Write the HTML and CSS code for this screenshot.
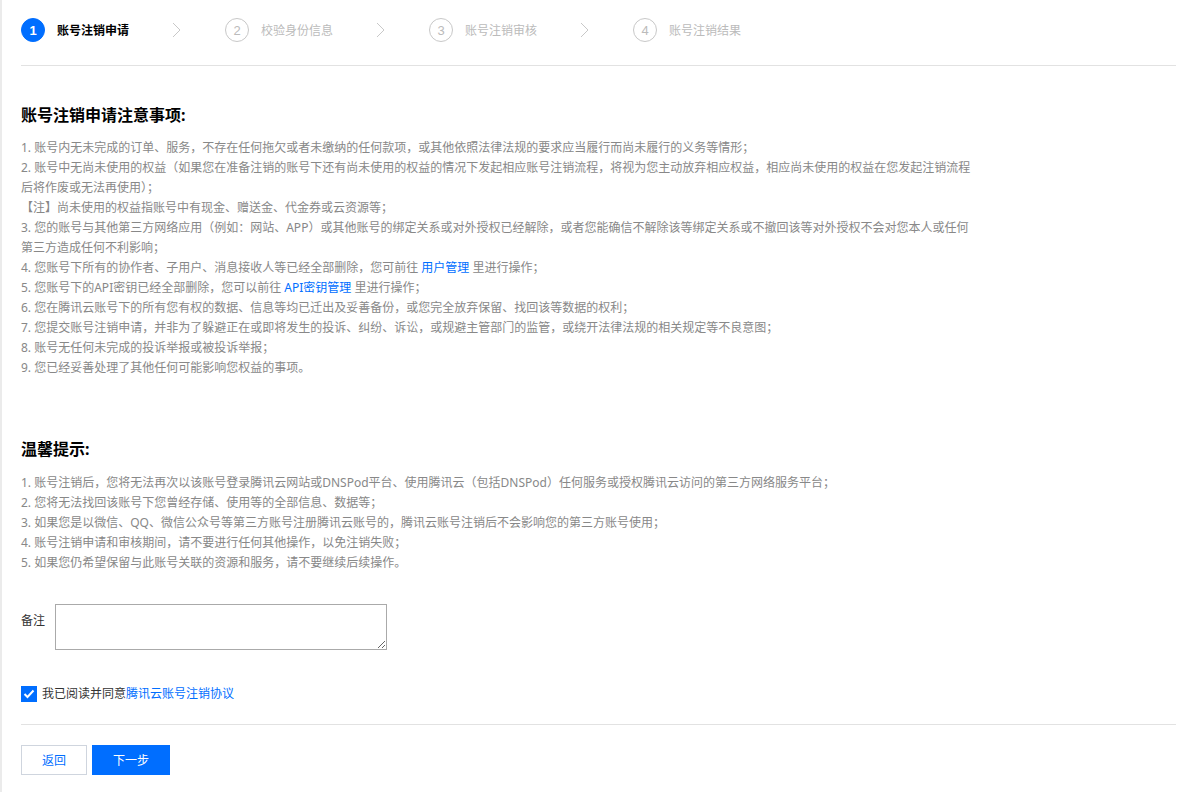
FILE: index.html
```html
<!DOCTYPE html>
<html lang="zh-CN">
<head>
<meta charset="utf-8">
<title>账号注销申请</title>
<link rel="stylesheet" href="styles.css">
</head>
<body>
<div class="page">
  <div class="steps">
    <div class="step active">
      <span class="num">1</span><span class="label">账号注销申请</span>
      <svg class="chev" width="9" height="16" viewBox="0 0 9 16"><path d="M1 1 L8 8 L1 15" fill="none" stroke="#c8c8c8" stroke-width="1"/></svg>
    </div>
    <div class="step">
      <span class="num">2</span><span class="label">校验身份信息</span>
      <svg class="chev" width="9" height="16" viewBox="0 0 9 16"><path d="M1 1 L8 8 L1 15" fill="none" stroke="#c8c8c8" stroke-width="1"/></svg>
    </div>
    <div class="step">
      <span class="num">3</span><span class="label">账号注销审核</span>
      <svg class="chev" width="9" height="16" viewBox="0 0 9 16"><path d="M1 1 L8 8 L1 15" fill="none" stroke="#c8c8c8" stroke-width="1"/></svg>
    </div>
    <div class="step">
      <span class="num">4</span><span class="label">账号注销结果</span>
    </div>
  </div>

  <h2 class="title first">账号注销申请注意事项:</h2>
  <div class="list">
    <p>1. 账号内无未完成的订单、服务，不存在任何拖欠或者未缴纳的任何款项，或其他依照法律法规的要求应当履行而尚未履行的义务等情形；</p>
    <p>2. 账号中无尚未使用的权益（如果您在准备注销的账号下还有尚未使用的权益的情况下发起相应账号注销流程，将视为您主动放弃相应权益，相应尚未使用的权益在您发起注销流程<br>后将作废或无法再使用）；</p>
    <p>【注】尚未使用的权益指账号中有现金、赠送金、代金券或云资源等；</p>
    <p>3. 您的账号与其他第三方网络应用（例如：网站、APP）或其他账号的绑定关系或对外授权已经解除，或者您能确信不解除该等绑定关系或不撤回该等对外授权不会对您本人或任何<br>第三方造成任何不利影响；</p>
    <p>4. 您账号下所有的协作者、子用户、消息接收人等已经全部删除，您可前往 <a href="#">用户管理</a> 里进行操作；</p>
    <p>5. 您账号下的API密钥已经全部删除，您可以前往 <a href="#">API密钥管理</a> 里进行操作；</p>
    <p>6. 您在腾讯云账号下的所有您有权的数据、信息等均已迁出及妥善备份，或您完全放弃保留、找回该等数据的权利；</p>
    <p>7. 您提交账号注销申请，并非为了躲避正在或即将发生的投诉、纠纷、诉讼，或规避主管部门的监管，或绕开法律法规的相关规定等不良意图；</p>
    <p>8. 账号无任何未完成的投诉举报或被投诉举报；</p>
    <p>9. 您已经妥善处理了其他任何可能影响您权益的事项。</p>
  </div>

  <h2 class="title second">温馨提示:</h2>
  <div class="list">
    <p>1. 账号注销后，您将无法再次以该账号登录腾讯云网站或DNSPod平台、使用腾讯云（包括DNSPod）任何服务或授权腾讯云访问的第三方网络服务平台；</p>
    <p>2. 您将无法找回该账号下您曾经存储、使用等的全部信息、数据等；</p>
    <p>3. 如果您是以微信、QQ、微信公众号等第三方账号注册腾讯云账号的，腾讯云账号注销后不会影响您的第三方账号使用；</p>
    <p>4. 账号注销申请和审核期间，请不要进行任何其他操作，以免注销失败；</p>
    <p>5. 如果您仍希望保留与此账号关联的资源和服务，请不要继续后续操作。</p>
  </div>

  <div class="remark">
    <label class="remark-label" for="remark">备注</label>
    <textarea id="remark" class="remark-input"></textarea>
  </div>

  <div class="agree">
    <span class="checkbox"><svg width="12" height="10" viewBox="0 0 12 10"><path d="M1.5 5 L4.5 8 L10.5 1.5" fill="none" stroke="#fff" stroke-width="2"/></svg></span>
    <span class="agree-text">我已阅读并同意<a href="#">腾讯云账号注销协议</a></span>
  </div>

  <div class="footer">
    <button class="btn btn-default">返回</button>
    <button class="btn btn-primary">下一步</button>
  </div>
</div>
</body>
</html>
```

FILE: styles.css
```css
* { box-sizing: border-box; }
html, body {
  margin: 0;
  padding: 0;
  background: #fff;
}
body {
  font-family: "Noto Sans", "Noto Sans CJK SC", sans-serif;
  font-size: 12px;
  color: #888;
  border-left: 2px solid #ebebeb;
  min-height: 792px;
}
.page {
  padding: 0 17px 0 19px;
}
.steps {
  display: flex;
  height: 66px;
  padding-top: 18px;
  border-bottom: 1px solid #e2e2e2;
}
.step {
  width: 204px;
  height: 24px;
  display: flex;
  align-items: center;
}
.num {
  width: 24px;
  height: 24px;
  border-radius: 50%;
  border: 1px solid #c8c8c8;
  color: #bbb;
  font-family: "Liberation Sans", sans-serif;
  font-size: 13px;
  display: flex;
  align-items: center;
  justify-content: center;
  flex: none;
}
.label {
  margin-left: 12px;
  width: 72px;
  color: #bbb;
  font-size: 12px;
  white-space: nowrap;
}
.chev {
  margin-left: 43px;
  flex: none;
}
.step.active .num {
  background: #006eff;
  border-color: #006eff;
  color: #fff;
  font-weight: bold;
}
.step.active .label {
  color: #000;
  font-weight: bold;
}
.title {
  margin: 0;
  font-size: 16px;
  line-height: 24px;
  font-weight: bold;
  color: #000;
}
.title.first {
  margin-top: 37px;
  margin-bottom: 11px;
}
.title.second {
  margin-top: 59px;
  margin-bottom: 12px;
}
.list p {
  margin: 0;
  line-height: 20px;
  white-space: nowrap;
}
.list a {
  color: #006eff;
  text-decoration: none;
}
.remark {
  display: flex;
  align-items: flex-start;
  margin-top: 31px;
}
.remark-label {
  width: 34px;
  padding-top: 7px;
  color: #333;
  font-size: 12px;
  line-height: 20px;
}
.remark-input {
  width: 332px;
  height: 46px;
  border: 1px solid #aaa;
  margin: 0;
  padding: 4px 6px;
  font-family: inherit;
  font-size: 12px;
}
.agree {
  display: flex;
  align-items: center;
  margin-top: 34px;
  height: 20px;
  padding-bottom: 1px;
}
.checkbox {
  width: 16px;
  height: 16px;
  background: #006eff;
  display: flex;
  align-items: center;
  justify-content: center;
  flex: none;
}
.agree-text {
  margin-left: 5px;
  color: #333;
  line-height: 20px;
}
.agree-text a {
  color: #006eff;
  text-decoration: none;
}
.footer {
  margin-top: 20px;
  border-top: 1px solid #e2e2e2;
  padding-top: 20px;
  display: flex;
  gap: 5px;
}
.btn {
  height: 30px;
  font-family: inherit;
  font-size: 12px;
  cursor: pointer;
  padding: 0;
  margin: 0;
}
.btn-default {
  width: 66px;
  background: #fff;
  border: 1px solid #cfd5de;
  color: #006eff;
}
.btn-primary {
  width: 78px;
  background: #006eff;
  border: 1px solid #006eff;
  color: #fff;
}
```
